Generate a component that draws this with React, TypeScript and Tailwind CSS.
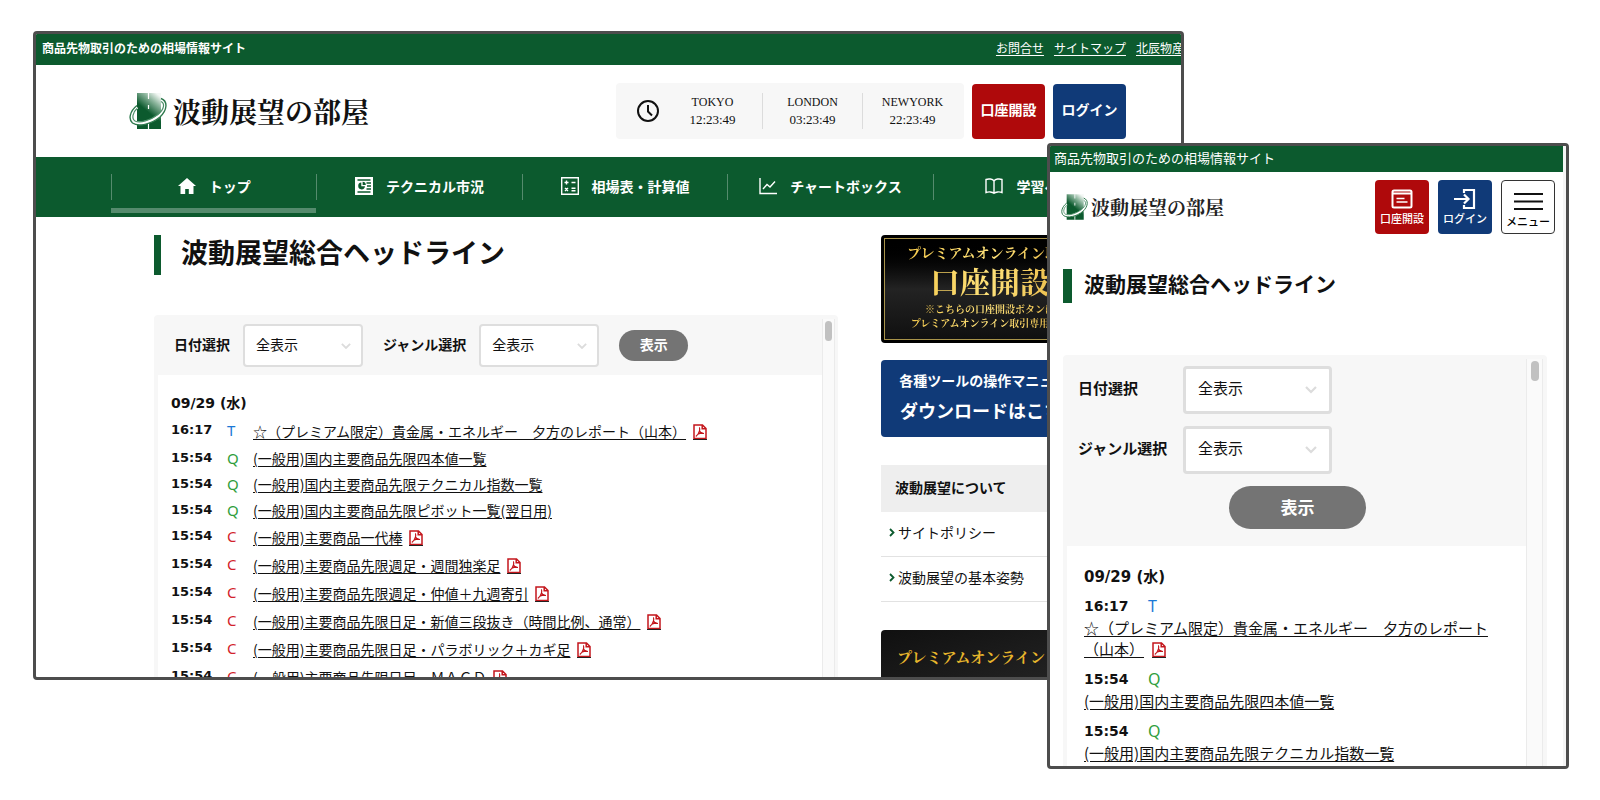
import { useId } from "react";

type Category = "T" | "Q" | "C";

interface Headline {
  time: string;
  category: Category;
  title: string;
  pdf?: boolean;
}

const headlines: Headline[] = [
  { time: "16:17", category: "T", title: "☆（プレミアム限定）貴金属・エネルギー　夕方のレポート（山本）", pdf: true },
  { time: "15:54", category: "Q", title: "(一般用)国内主要商品先限四本値一覧" },
  { time: "15:54", category: "Q", title: "(一般用)国内主要商品先限テクニカル指数一覧" },
  { time: "15:54", category: "Q", title: "(一般用)国内主要商品先限ピボット一覧(翌日用)" },
  { time: "15:54", category: "C", title: "(一般用)主要商品一代棒", pdf: true },
  { time: "15:54", category: "C", title: "(一般用)主要商品先限週足・週間独楽足", pdf: true },
  { time: "15:54", category: "C", title: "(一般用)主要商品先限週足・仲値＋九週寄引", pdf: true },
  { time: "15:54", category: "C", title: "(一般用)主要商品先限日足・新値三段抜き（時間比例、通常）", pdf: true },
  { time: "15:54", category: "C", title: "(一般用)主要商品先限日足・パラボリック＋カギ足", pdf: true },
  { time: "15:54", category: "C", title: "(一般用)主要商品先限日足・ＭＡＣＤ", pdf: true },
];

const categoryColor: Record<Category, string> = {
  T: "text-[#1a78d6]",
  Q: "text-[#2f9e3c]",
  C: "text-[#d2222a]",
};

const clocks = [
  { city: "TOKYO", time: "12:23:49" },
  { city: "LONDON", time: "03:23:49" },
  { city: "NEWYORK", time: "22:23:49" },
];

function LogoMark({ className }: { className: string }) {
  const id = useId();
  return (
    <svg viewBox="0 0 38 36" className={className} aria-hidden="true">
      <defs>
        <linearGradient id={id} x1="0.8" y1="0" x2="0.5" y2="0.55">
          <stop offset="0" stopColor="#f4f8f5" />
          <stop offset="0.4" stopColor="#8fb79f" />
          <stop offset="1" stopColor="#0c5a2e" />
        </linearGradient>
      </defs>
      <path d="M8 0h24v36H8z" fill={`url(#${id})`} />
      <path d="M19.500 0v6M19.500 12v4M19.500 28v8" stroke="#fff" strokeWidth="1.200" />
      {/* ring around the letter, open behind its upper part */}
      <g fill="none">
        <path d="M33 7.500C38 10 37 17 30 23C22 29.500 10 32 4.500 29C0.500 26 2 19 8 14" stroke="#fff" strokeWidth="3.500" />
        <path d="M32 5.500C39 8 38.500 17 31 24C22 31.500 9 34 3.500 30C-1 26 1 18 8 12.500" stroke="#2f7a4e" strokeWidth="1.400" />
        <path d="M32 8.500C36 10.500 35.500 16 29 21.500C21 27.500 11 30.500 6 28C2.500 25.500 3.500 19.500 8 15.500" stroke="#4c9069" strokeWidth="1.200" />
      </g>
    </svg>
  );
}

function PdfIcon() {
  return (
    <svg viewBox="0 0 14 16" className="inline-block h-4 w-3.5 align-[-3px]" role="img" aria-label="PDF">
      <path d="M1 1h8.500L13 4.500v10H1z M9.200 1v3.800H13" fill="none" stroke="#c4161c" strokeWidth="1.500" />
      <path
        d="M6 3.500c.8 0 .8 2 .5 3.500.6 1.500 1.900 2.400 4.500 2.500M6.500 7C6 9 4.800 11 2.800 12.500M4.800 10.200c1.500-.7 3-1 4.700-1"
        fill="none"
        stroke="#c4161c"
        strokeWidth="1.200"
      />
      <path d="M0 15.500h14" stroke="#222" strokeWidth="1" />
    </svg>
  );
}

function SelectBox({ label, mobile = false }: { label: string; mobile?: boolean }) {
  const id = useId();
  return (
    <>
      <label htmlFor={id} className={mobile ? "w-[105px] pb-1 text-[15px] font-bold" : "mr-[13px] pb-0.5 text-sm font-bold"}>
        {label}
      </label>
      <div className={mobile ? "relative h-12 w-[149px]" : "relative mr-5 h-[43px] w-[120px]"}>
        <select
          id={id}
          className={
            mobile
              ? "size-full appearance-none rounded-sm border-3 border-[#dedede] bg-white pb-1 pl-3 text-[15px]"
              : "size-full appearance-none rounded-sm border-2 border-[#dedede] bg-white pb-0.5 pl-[11px] text-sm"
          }
        >
          <option>全表示</option>
        </select>
        <svg
          viewBox="0 0 12 8"
          className={mobile ? "pointer-events-none absolute top-5 right-[15px] w-3" : "pointer-events-none absolute top-[19px] right-3 w-2.5"}
          aria-hidden="true"
        >
          <path d="M1 1l5 5 5-5" fill="none" stroke="#dcdcdc" strokeWidth="2.200" />
        </svg>
      </div>
    </>
  );
}

function ScrollTrack({ mobile = false }: { mobile?: boolean }) {
  return (
    <div className={mobile ? "mt-1 w-[17px] border-x border-[#ebebeb] bg-[#fafafa] pt-0.5" : "mt-1 w-[13px] border-x border-[#ebebeb] bg-[#fafafa] pt-0.5"}>
      <div className={mobile ? "mx-auto h-5 w-2 rounded-full bg-[#c1c1c1]" : "mx-auto h-5 w-[7px] rounded-full bg-[#c1c1c1]"} />
    </div>
  );
}

/* Icons of the global navigation */
const navItems = [
  {
    label: "トップ",
    icon: <path d="M9 1L0 9h2.500v8h4.700v-5h3.600v5h4.700V9H18z" fill="#fff" />,
  },
  {
    label: "テクニカル市況",
    icon: (
      <>
        <path d="M0 0h18v18H0z" fill="#fff" />
        <path d="M2.500 3h13M2.500 15h13M11.500 6h4.500M12 9h4M11.500 12h4.500" stroke="#0c5a2e" strokeWidth="1.300" />
        <path d="M6.300 5.600A3.400 3.400 0 1 0 10 9.300H6.300z" fill="#0c5a2e" />
        <path d="M7.600 4.800v3.200h3.200A3.300 3.300 0 0 0 7.600 4.800z" fill="#0c5a2e" />
      </>
    ),
  },
  {
    label: "相場表・計算値",
    icon: (
      <path
        d="M.7.7h16.600v16.600H.7z M3.500 5.500h4M5.500 3.500v4M10.500 5.500h4M4 11l3 3M7 11l-3 3M10.500 11.300h4M10.500 13.700h4"
        fill="none"
        stroke="#fff"
        strokeWidth="1.400"
      />
    ),
  },
  {
    label: "チャートボックス",
    icon: <path d="M1 1v15.500h17M4 12l4-4.500 3 2.500 5-5.500" fill="none" stroke="#fff" strokeWidth="1.400" />,
  },
  {
    label: "学習ページ",
    icon: (
      <path
        d="M9 4C7.500 1.800 3.500 1.500 1 2.500v13c2.500-1 6.500-.7 8 .8 1.500-1.500 5.500-1.800 8-.8v-13C14.500 1.500 10.500 1.800 9 4zM9 4v12"
        fill="none"
        stroke="#fff"
        strokeWidth="1.400"
      />
    ),
  },
];

function DesktopHeader() {
  return (
    <header>
      <div className="flex h-[31px] items-center justify-between bg-[#0c5a2e] pr-[29px] pb-1 pl-1.5 text-xs text-white">
        <p className="font-bold">商品先物取引のための相場情報サイト</p>
        <div className="flex gap-2.5">
          <a href="#contact" className="underline underline-offset-2">お問合せ</a>
          <a href="#sitemap" className="underline underline-offset-2">サイトマップ</a>
          <a href="#company" className="underline underline-offset-2">北辰物産</a>
        </div>
      </div>

      <div className="flex h-[92px] items-center justify-between pr-[87px] pl-[93px]">
        <a href="#top" className="flex items-center gap-1.5">
          <LogoMark className="h-9 w-[38px]" />
          <span className="font-['Noto_Serif_CJK_JP','Noto_Sans_CJK_JP',serif] text-[28px] leading-9 font-bold">波動展望の部屋</span>
        </a>
        <div className="flex items-center gap-2">
          <div className="flex h-14 items-center rounded-sm bg-[#f7f7f7] pr-0.5 pl-5 font-['Liberation_Serif',serif]">
            <svg viewBox="0 0 24 24" className="mr-[2px] size-6" aria-hidden="true">
              <circle cx="12" cy="12" r="10" fill="none" stroke="#111" strokeWidth="2" />
              <path d="M12 6v6.500l4 4" fill="none" stroke="#111" strokeWidth="2" />
            </svg>
            {clocks.map((clock) => (
              <div key={clock.city} className="flex h-9 w-[100px] flex-col justify-center border-l border-[#dcdcdc] text-center first-of-type:border-transparent">
                <span className="text-xs leading-[18px]">{clock.city}</span>
                <span className="text-[13px] leading-[18px]">{clock.time}</span>
              </div>
            ))}
          </div>
          <button type="button" className="h-[55px] w-[73px] rounded-sm bg-[#af090b] pb-1 text-sm font-bold text-white">口座開設</button>
          <button type="button" className="h-[55px] w-[73px] rounded-sm bg-[#103a78] pb-1 text-sm font-bold text-white">ログイン</button>
        </div>
      </div>

      <nav className="flex h-[60px] bg-[#0c5a2e] px-[75px] text-sm font-bold text-white">
        {navItems.map((item, index) => (
          <a
            key={item.label}
            href="#nav"
            className={
              index === 0
                ? "mb-1 flex flex-1 flex-col border-b-5 border-white/30 pt-[17px]"
                : "flex flex-1 flex-col pt-[17px]"
            }
          >
            <span className="flex h-[26px] items-center justify-center gap-[13px] border-l border-white/30 pb-0.5">
              <svg viewBox="0 0 18 18" className="size-[18px]" aria-hidden="true">{item.icon}</svg>
              {item.label}
            </span>
          </a>
        ))}
      </nav>
    </header>
  );
}

function DesktopHeadlines() {
  return (
    <section className="w-[684px]">
      <h1 className="flex h-10 items-center border-l-7 border-[#0c5a2e] pb-1.5 pl-5 text-[27px] font-bold">
        波動展望総合ヘッドライン
      </h1>
      <div className="mt-10 flex rounded-t bg-[#f7f7f7] pr-[3px] pl-1">
        <div className="flex-1">
          <form className="flex h-15 items-center pl-4">
            <SelectBox label="日付選択" />
            <SelectBox label="ジャンル選択" />
            <button type="button" className="h-[31px] w-[69px] rounded-full bg-[#747474] pb-0.5 text-sm font-bold text-white">表示</button>
          </form>
          <div className="bg-white px-[13px] pt-3.5">
            <h2 className="font-['DejaVu_Sans','Noto_Sans_CJK_JP',sans-serif] text-sm leading-7 font-bold">09/29 (水)</h2>
            <ul>
              {headlines.map((item) => (
                <li key={item.title} className="flex">
                  <span className="w-14 font-['DejaVu_Sans',sans-serif] text-[13px] leading-[26px] font-bold">{item.time}</span>
                  <span className={`w-[26px] font-['Noto_Sans',sans-serif] text-[15px] leading-[26px] ${categoryColor[item.category]}`}>
                    {item.category}
                  </span>
                  <a href="#report" className={item.pdf ? "text-sm leading-7" : "text-sm leading-[26px]"}>
                    <span className="mr-[7px] underline underline-offset-2">{item.title}</span>
                    {item.pdf && <PdfIcon />}
                  </a>
                </li>
              ))}
            </ul>
          </div>
        </div>
        <ScrollTrack />
      </div>
    </section>
  );
}

function Sidebar() {
  return (
    <aside className="w-[218px] text-center whitespace-nowrap">
      <a href="#premium" className="block h-[108px] rounded-sm border-3 border-black bg-black font-['Noto_Serif_CJK_JP','Noto_Sans_CJK_JP',serif] font-bold">
        <div className="h-full border border-[#a8934a] bg-linear-to-b from-black via-[#232323] to-[#101010] pt-[3px]">
          <div className="bg-linear-to-r from-[#f0c23c] via-[#ffe27a] to-[#e0aa28] bg-clip-text text-transparent">
            <p className="text-sm leading-5">プレミアムオンライン取引</p>
            <p className="pb-1 text-[30px] leading-9">口座開設</p>
            <p className="text-[10px] leading-[14px]">※こちらの口座開設ボタンは</p>
            <p className="text-[10px] leading-[14px]">プレミアムオンライン取引専用です</p>
          </div>
        </div>
      </a>
      <a href="#manual" className="mt-[17px] block h-[77px] rounded-sm bg-[#103a78] pt-1.5 font-bold text-white">
        <p className="text-sm leading-7">各種ツールの操作マニュアル</p>
        <p className="text-lg leading-8">ダウンロードはこちら</p>
      </a>
      <div className="mt-7 text-left text-sm">
        <h2 className="bg-[#eee] px-3.5 pb-0.5 leading-[45px] font-bold">波動展望について</h2>
        {["サイトポリシー", "波動展望の基本姿勢"].map((label) => (
          <a key={label} href="#about" className="flex h-[45px] items-center gap-[3px] border-b border-[#e2e2e2] pb-1 pl-2">
            <svg viewBox="0 0 6 9" className="h-[9px] w-1.5" aria-hidden="true">
              <path d="M1 1l3.500 3.500L1 8" fill="none" stroke="#0c5a2e" strokeWidth="1.800" />
            </svg>
            {label}
          </a>
        ))}
      </div>
      <a href="#online" className="mt-7 block rounded-sm bg-linear-to-br from-[#101010] to-[#2a2a2a] pt-3 pb-8 pl-4 text-left font-['Noto_Serif_CJK_JP','Noto_Sans_CJK_JP',serif] text-[15px] leading-[30px] font-bold text-[#e6b52c]">
        プレミアムオンライン
      </a>
    </aside>
  );
}

function DesktopWindow() {
  return (
    <div className="absolute top-[31px] left-[33px] h-[649px] w-[1151px] overflow-hidden rounded border-3 border-[#4d4d4d] bg-white">
      {/* page is a little wider than the window, the right edge is cut off */}
      <div className="w-[1177px]">
        <DesktopHeader />
        <div className="flex justify-between pt-[18px] pr-[114px] pl-[118px]">
          <DesktopHeadlines />
          <Sidebar />
        </div>
      </div>
    </div>
  );
}

function MobileWindow() {
  return (
    <div className="absolute top-[143px] left-[1047px] h-[626px] w-[522px] overflow-hidden rounded border-3 border-[#4d4d4d] bg-white">
      <div className="border-r-3 border-[#f5f5f5]">
        <p className="bg-[#0c5a2e] pb-0.5 pl-1 text-[13px] leading-6 text-white">商品先物取引のための相場情報サイト</p>

        <header className="flex items-start justify-between pt-2 pr-2 pl-[11px]">
          <a href="#top" className="mt-3.5 flex items-center gap-[3px]">
            <LogoMark className="h-[26px] w-[27px]" />
            <span className="font-['Noto_Serif_CJK_JP','Noto_Sans_CJK_JP',serif] text-[19px] leading-[26px] font-bold text-[#222]">波動展望の部屋</span>
          </a>
          <div className="flex gap-[9px] text-[11px] leading-4 text-white">
            <button type="button" className="flex size-[54px] flex-col items-center rounded bg-[#af090b] pt-2 font-medium">
              <svg viewBox="0 0 22 22" className="size-[22px]" aria-hidden="true">
                <rect x="1.500" y="2.500" width="19" height="17" rx="1.500" fill="none" stroke="#fff" strokeWidth="2" />
                <path d="M2 5.500h18" stroke="#fff" strokeWidth="2" />
                <path d="M5.500 10.500h8M5.500 14h11" stroke="#fff" strokeWidth="1.500" />
              </svg>
              口座開設
            </button>
            <button type="button" className="flex size-[54px] flex-col items-center rounded bg-[#103a78] pt-2 font-medium">
              <svg viewBox="0 0 22 22" className="size-[22px]" aria-hidden="true">
                <path d="M10 5V2h10v18H10v-3M0 11h14M10 6.500l4.500 4.500-4.500 4.500" fill="none" stroke="#fff" strokeWidth="2.200" />
              </svg>
              ログイン
            </button>
            <button type="button" className="flex size-[54px] flex-col items-center rounded border border-[#333] bg-white pt-3 font-medium text-black">
              <svg viewBox="0 0 29 18" className="mb-0.5 h-[18px] w-[29px]" aria-hidden="true">
                <path d="M0 1h29M0 8.500h29M0 16h29" stroke="#111" strokeWidth="2" />
              </svg>
              メニュー
            </button>
          </div>
        </header>

        <section className="pt-[35px] pr-4 pl-[13px]">
          <h1 className="flex h-[34px] items-center border-l-9 border-[#0c5a2e] pb-1 pl-3 text-[21px] font-bold">
            波動展望総合ヘッドライン
          </h1>
          <div className="mt-[52px] flex rounded-t bg-[#f7f7f7] pr-1 pl-1">
            <div className="flex-1">
              <form className="flex h-[191px] flex-col gap-3 pt-[11px] pl-[11px]">
                <div className="flex items-center">
                  <SelectBox label="日付選択" mobile />
                </div>
                <div className="flex items-center">
                  <SelectBox label="ジャンル選択" mobile />
                </div>
                <button type="button" className="ml-[151px] h-[43px] w-[137px] rounded-full bg-[#747474] pb-0.5 text-[17px] font-bold text-white">表示</button>
              </form>
              <div className="bg-white px-[17px] pt-[17px]">
                <h2 className="font-['DejaVu_Sans','Noto_Sans_CJK_JP',sans-serif] text-[15px] leading-7 font-bold">09/29 (水)</h2>
                <ul className="flex flex-col gap-[9px] pt-1">
                  {headlines.slice(0, 4).map((item) => (
                    <li key={item.title} className="text-[15px] leading-[21px]">
                      <div className="flex text-sm leading-[22px]">
                        <span className="w-16 font-['DejaVu_Sans',sans-serif] font-bold">{item.time}</span>
                        <span className={`font-['Noto_Sans',sans-serif] text-base leading-[22px] ${categoryColor[item.category]}`}>{item.category}</span>
                      </div>
                      <a href="#report" className="block">
                        <span className="mr-2 underline underline-offset-2">{item.title}</span>
                        {item.pdf && <PdfIcon />}
                      </a>
                    </li>
                  ))}
                </ul>
              </div>
            </div>
            <ScrollTrack mobile />
          </div>
        </section>
      </div>
    </div>
  );
}

export default function App() {
  return (
    <main className="relative min-h-screen overflow-hidden bg-white font-['Noto_Sans_CJK_JP',sans-serif] text-[#111]">
      <DesktopWindow />
      <MobileWindow />
    </main>
  );
}
